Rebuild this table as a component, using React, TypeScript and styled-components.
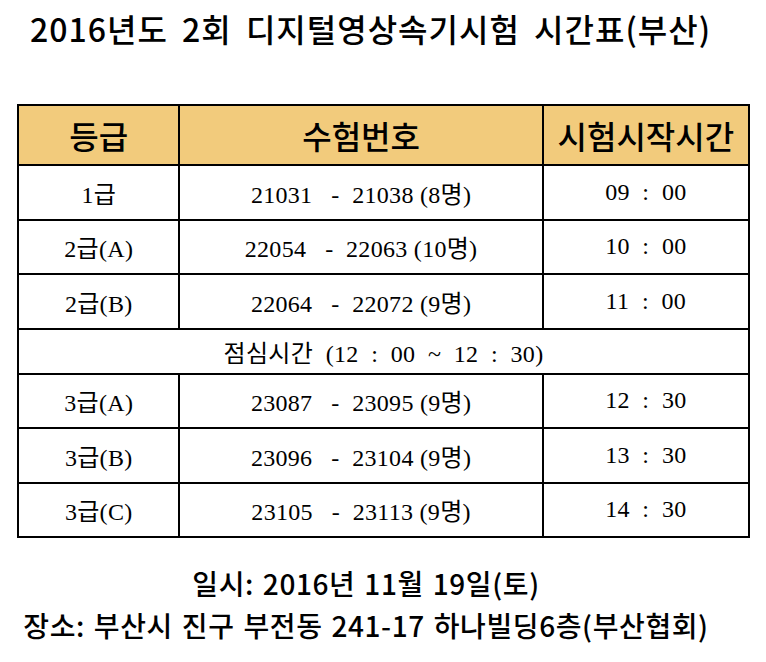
import React from 'react';
import styled, { createGlobalStyle } from 'styled-components';

const GlobalStyle = createGlobalStyle`
  html, body {
    margin: 0;
    padding: 0;
    background: #fff;
  }
  body {
    width: 766px;
    height: 662px;
    overflow: hidden;
    color: #000;
  }
`;

const Page = styled.div`
  display: flex;
  flex-direction: column;
  width: 766px;
  height: 662px;
`;

const Title = styled.h1`
  margin: 0;
  padding: 8px 0 0 30px;
  height: 104px;
  box-sizing: border-box;
  font-family: 'Noto Sans CJK KR', sans-serif;
  font-size: 32px;
  font-weight: 500;
  line-height: 40px;
  letter-spacing: 1px;
  word-spacing: 6px;
`;

const Table = styled.table`
  margin-left: 17px;
  width: 733px;
  border-collapse: collapse;
  border: 2px solid #000;
`;

const HeadCell = styled.th`
  height: 58px;
  padding: 0;
  background: #f2cb7c;
  border: 2px solid #000;
  font-family: 'Noto Sans CJK KR', sans-serif;
  font-size: 32px;
  font-weight: 500;
  text-align: center;
`;

const Cell = styled.td<{ $short?: boolean }>`
  height: ${(p) => (p.$short ? 43 : 52.5)}px;
  padding: 0;
  border: 2px solid #000;
  font-family: 'Liberation Serif', 'Noto Sans CJK KR', serif;
  font-size: 24px;
  letter-spacing: 0.3px;
  text-align: center;
  white-space: pre;
`;

const Footer = styled.div`
  display: flex;
  flex-direction: column;
  align-items: center;
  gap: 6px;
  padding: 27px 34px 0 0;
  font-family: 'Noto Sans CJK KR', sans-serif;
  font-size: 28px;
  font-weight: 500;
  line-height: 36px;
  letter-spacing: 0.6px;
  word-spacing: 2px;
  white-space: pre;
`;

type Row = { grade: string; range: string; time: string } | { lunch: string };

const rows: Row[] = [
  { grade: '1급', range: '21031   -  21038 (8명)', time: '09  :  00' },
  { grade: '2급(A)', range: '22054   -  22063 (10명)', time: '10  :  00' },
  { grade: '2급(B)', range: '22064   -  22072 (9명)', time: '11  :  00' },
  { lunch: '점심시간  (12  :  00  ~  12  :  30)' },
  { grade: '3급(A)', range: '23087   -  23095 (9명)', time: '12  :  30' },
  { grade: '3급(B)', range: '23096   -  23104 (9명)', time: '13  :  30' },
  { grade: '3급(C)', range: '23105   -  23113 (9명)', time: '14  :  30' },
];

export default function App() {
  return (
    <Page>
      <GlobalStyle />
      <Title>2016년도 2회 디지털영상속기시험 시간표(부산)</Title>
      <Table>
        <colgroup>
          <col style={{ width: 162 }} />
          <col style={{ width: 364 }} />
          <col style={{ width: 207 }} />
        </colgroup>
        <thead>
          <tr>
            <HeadCell>등급</HeadCell>
            <HeadCell>수험번호</HeadCell>
            <HeadCell>시험시작시간</HeadCell>
          </tr>
        </thead>
        <tbody>
          {rows.map((r, i) =>
            'lunch' in r ? (
              <tr key={i}>
                <Cell $short colSpan={3}>{r.lunch}</Cell>
              </tr>
            ) : (
              <tr key={i}>
                <Cell>{r.grade}</Cell>
                <Cell>{r.range}</Cell>
                <Cell>{r.time}</Cell>
              </tr>
            )
          )}
        </tbody>
      </Table>
      <Footer>
        <div>일시: 2016년 11월 19일(토)</div>
        <div>장소: 부산시 진구 부전동 241-17 하나빌딩6층(부산협회)</div>
      </Footer>
    </Page>
  );
}
